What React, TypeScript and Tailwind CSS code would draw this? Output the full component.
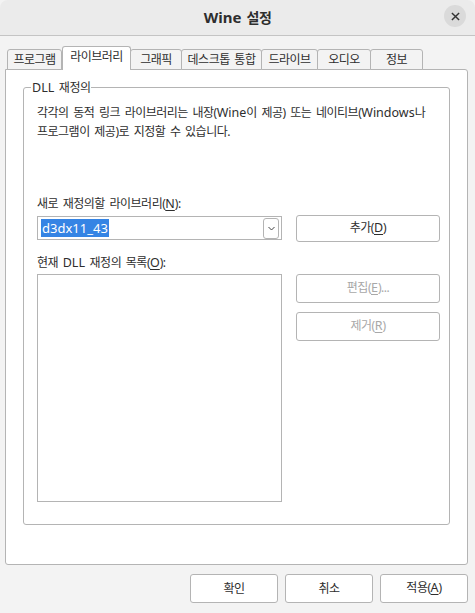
import React from "react";

const TABS = ["프로그램", "라이브러리", "그래픽", "데스크톱 통합", "드라이브", "오디오", "정보"];
const TAB_WIDTHS = ["w-[55px]", "w-[69px]", "w-[52px]", "w-[81px]", "w-[57px]", "w-[54px]", "w-[53px]"];

// latin runs are drawn a little larger than the hangul, as in the original font
function L({ children, u }: { children: React.ReactNode; u?: boolean }) {
  return (
    <span className={`text-[12.5px] tracking-normal ${u ? "underline underline-offset-2" : ""}`}>{children}</span>
  );
}

function PushButton({
  children,
  disabled,
  className,
}: {
  children: React.ReactNode;
  disabled?: boolean;
  className?: string;
}) {
  return (
    <button
      type="button"
      disabled={disabled}
      className={`flex items-center justify-center rounded-[3px] border border-[#b4b4b4] bg-white text-[12px] tracking-[-0.5px] ${
        disabled ? "text-[#a8a8a8]" : "text-[#2e2e2e]"
      } ${className ?? ""}`}
    >
      <span>{children}</span>
    </button>
  );
}

export default function App() {
  return (
    <div
      className="flex h-[613px] w-[475px] flex-col overflow-hidden bg-[#f3f3f3] text-[12px] tracking-[-0.5px] text-[#2e2e2e] [word-spacing:2px]"
      style={{ fontFamily: '"Noto Sans", "Noto Sans CJK KR", sans-serif' }}
    >
      {/* title bar */}
      <div className="relative flex h-[36px] shrink-0 items-center justify-center rounded-t-[8px] border-b border-[#c4c4c4] bg-[#ebebeb]">
        <span className="text-[14px] font-bold tracking-[-0.5px] text-[#2e2e2e]">
          <span className="text-[15px] tracking-normal">Wine</span> 설정
        </span>
        <button
          type="button"
          aria-label="Close"
          className="absolute right-[9px] top-[5px] flex h-[22px] w-[22px] items-center justify-center rounded-full bg-[#dadada]"
        >
          <svg width="9" height="9" viewBox="0 0 10 10" fill="none" stroke="#333" strokeWidth="1.6">
            <path d="M1 1l8 8M9 1l-8 8" />
          </svg>
        </button>
      </div>

      <div className="flex flex-1 flex-col pl-[5px] pr-[7px]">
        {/* tabs */}
        <div className="relative z-10 -mb-px mt-[10px] flex items-end pl-[2px]">
          {TABS.map((t, i) =>
            i === 1 ? (
              <div
                key={t}
                className={`${TAB_WIDTHS[i]} flex h-[24px] items-center justify-center rounded-t-[3px] border border-b-0 border-[#b4b4b4] bg-white pb-[3px]`}
              >
                {t}
              </div>
            ) : (
              <div
                key={t}
                className={`${TAB_WIDTHS[i]} -ml-px flex h-[21px] items-center justify-center rounded-t-[3px] border border-[#b4b4b4] bg-[#f3f3f3] first:ml-0`}
              >
                {t}
              </div>
            )
          )}
        </div>

        {/* panel */}
        <div className="flex h-[496px] flex-col rounded-[3px] rounded-tl-none border border-[#b4b4b4] bg-white">
          <div className="relative ml-[17px] mr-[17px] mt-[17px] flex flex-col rounded-[3px] border border-[#b4b4b4] pb-[22px] pl-[13px] pr-[9px] pt-[15px]">
            <span className="absolute -top-[10px] left-[7px] bg-white px-px leading-[19px]">
              <L>DLL</L> 재정의
            </span>

            <p className="whitespace-nowrap leading-[19px]">
              각각의 동적 링크 라이브러리는 내장(<L>Wine</L>이 제공) 또는 네이티브(<L>Windows</L>나
              <br />
              프로그램이 제공)로 지정할 수 있습니다.
            </p>

            <div className="mt-[53px] leading-[19px]">
              새로 재정의할 라이브러리(<L u>N</L>):
            </div>

            <div className="mt-[2px] flex items-start gap-[14px]">
              <div className="mt-px flex h-[24px] w-[245px] items-center border border-[#b4b4b4] bg-white pl-[3px] pr-[2px]">
                <span className="flex-1 leading-[15px]">
                  <span className="bg-[#3584e4] px-px text-[13px] tracking-normal text-white">d3dx11_43</span>
                </span>
                <span className="flex h-[21px] w-[16px] items-center justify-center rounded-[3px] border border-[#b4b4b4]">
                  <svg width="7" height="5" viewBox="0 0 7 5" fill="none" stroke="#444" strokeWidth="1">
                    <path d="M0.5 1l3 3 3-3" />
                  </svg>
                </span>
              </div>
              <PushButton className="h-[27px] w-[144px]">
                추가(<L u>D</L>)
              </PushButton>
            </div>

            <div className="mt-[11px] leading-[19px]">
              현재 <L>DLL</L> 재정의 목록(<L u>O</L>):
            </div>

            <div className="mt-[2px] flex items-start gap-[14px]">
              <div className="h-[228px] w-[245px] border border-[#b4b4b4] bg-white" />
              <div className="flex flex-col gap-[9px]">
                <PushButton disabled className="h-[29px] w-[144px]">
                  편집(<L u>E</L>)...
                </PushButton>
                <PushButton disabled className="h-[29px] w-[144px]">
                  제거(<L u>R</L>)
                </PushButton>
              </div>
            </div>
          </div>
        </div>

        {/* dialog buttons */}
        <div className="mt-[9px] flex justify-end gap-[7px]">
          <PushButton className="h-[29px] w-[88px]">확인</PushButton>
          <PushButton className="h-[29px] w-[88px]">취소</PushButton>
          <PushButton className="h-[29px] w-[88px]">
            적용(<L u>A</L>)
          </PushButton>
        </div>
      </div>
    </div>
  );
}
